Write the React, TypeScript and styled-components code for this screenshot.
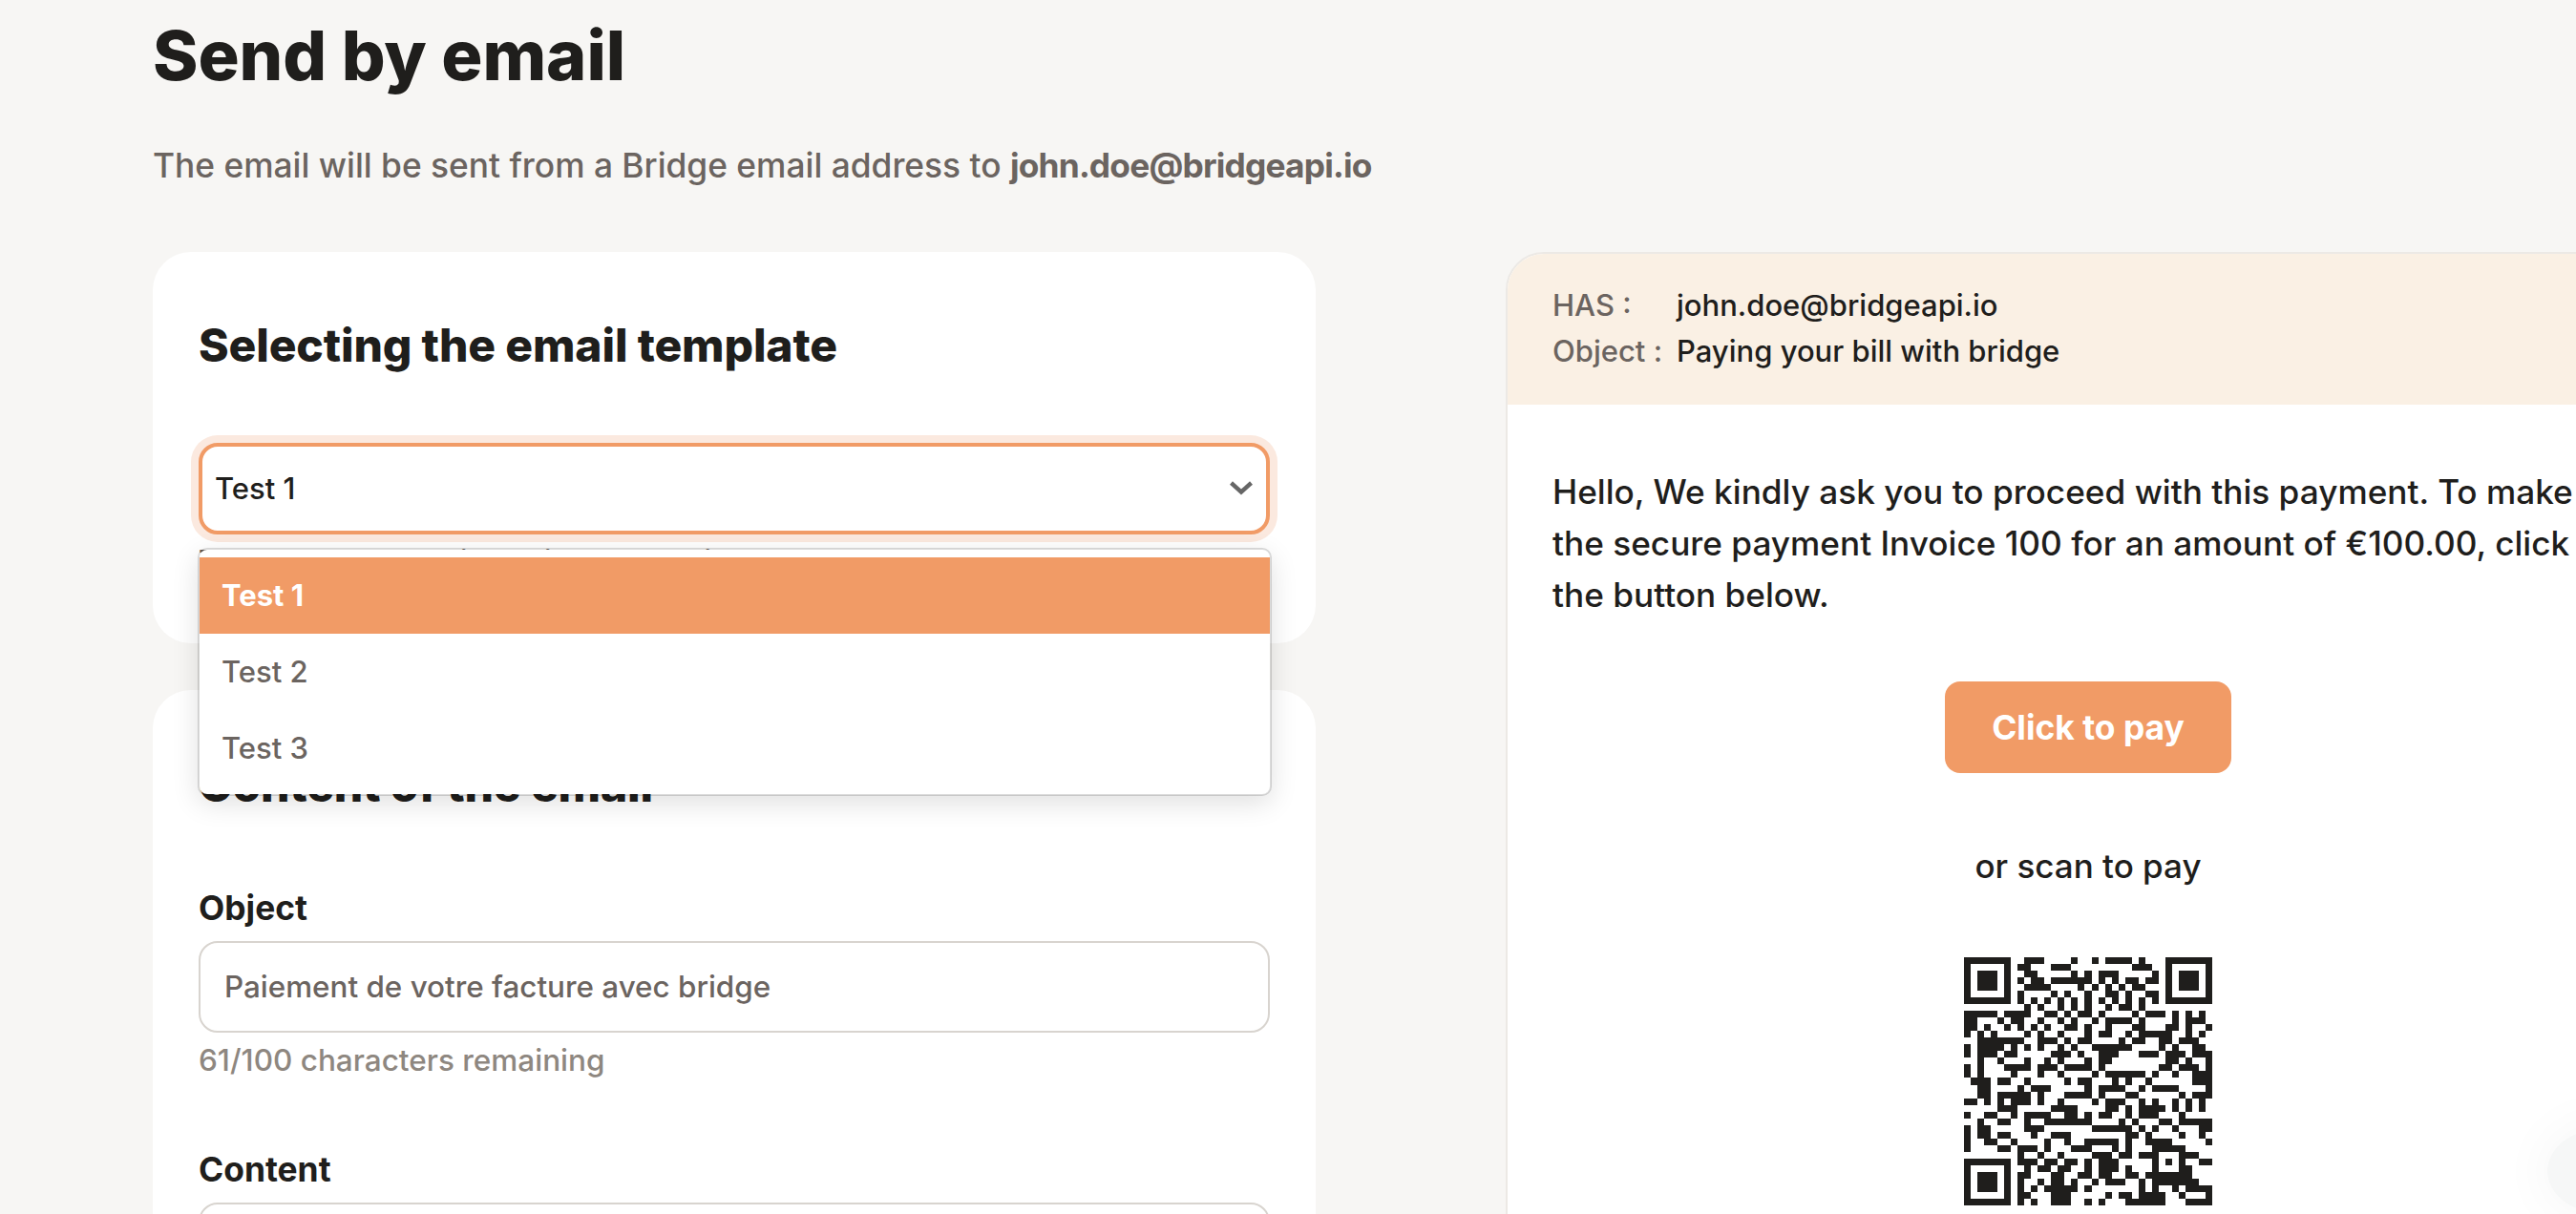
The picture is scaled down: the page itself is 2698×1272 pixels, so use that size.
import React from 'react'
import styled, { createGlobalStyle } from 'styled-components'

const GlobalStyle = createGlobalStyle`
  html, body {
    margin: 0;
    height: 1272px;
    overflow: hidden;
    background: #f7f6f4;
  }
  * {
    box-sizing: border-box;
  }
`

const QR_ROWS = [
  '0-6,9-11,16,19,21-24,26,30-36',
  '0,6,8-9,13-15,25-27,30,36',
  '0,2-4,6,9-10,16,18,20-22,28,30,32-34,36',
  '0,2-4,6,8,10-11,13-18,20,22,24-25,27-28,30,32-34,36',
  '0,2-4,6,9-12,17,19,21,23,25-26,30,32-34,36',
  '0,6,8,13,15,18,21-22,24,27-28,30,36',
  '0-6,8,10,12,14,16,18,20,22,24,26,28,30-36',
  '9,11,14,16,18,21,23-24,26',
  '0-4,6-9,12-13,15,17-18,20,25,27-29,31,33,35',
  '0-1,5,7-8,11,14,16,19,21-24,26,31,33-35',
  '0-1,3,6,8,10,12,15-16,18,21,25-26,30-31,33,36',
  '0,2,4,9,11,14,18,20-21,24,26-30,33,35',
  '2-8,11-13,15,17-18,23,25-26,29-30,32-34',
  '0,2-5,7,9,11,14,16,19-24,29,31,34-35',
  '0,2-4,6-7,13-15,17,20-22,26-28,30-32,34-36',
  '2,5,9,12,14,18,20-21,30-31,33,36',
  '0,2,6-9,11-13,15-18,20,29-30,32-34,36',
  '0,2,7,11,14,19,21-26,28,31,34-36',
  '1-3,5-6,9,15,17-18,22,24,27,34-36',
  '2-3,8,10-12,18,20-23,26,28-31,36',
  '2-3,5-9,11,15-18,20,24-25,32,34-36',
  '0-1,3,5,7-9,11,14,19,21-23,26,28,31,33,35',
  '5-7,13-16,21-22,24,26-29,31,33,35',
  '0,3-4,7,9-12,15-16,18,20-21,24,26-28,32',
  '2,5-6,9,12-18,23,25,29-30,32-36',
  '0,2-3,9-11,19-24,26,28,31,35-36',
  '0,2-3,5-6,10,13-15,24-25,27,32,35',
  '0,3-4,7,12,15,18-22,24,27-30,36',
  '0,5-6,8-10,12,16-18,22,24,28-32',
  '8,11,14,19-21,23-24,26-28,32-34',
  '0-6,8-10,12-13,15-16,18,20-22,28,30,32,35-36',
  '0,6,9,11-12,14-15,18,20-22,24,28,32-33',
  '0,2-4,6,8-9,13-14,17-18,20-21,24-25,27-33',
  '0,2-4,6,8,11,13-14,16,19,21-23,26,28-34',
  '0,2-4,6,8,10,12-16,18,26,28,31,33-36',
  '0,6,8-9,13-15,21,23-24,26-29,32,36',
  '0-6,8,10,13-15,18,20,24-29,33-36',
]

const Page = styled.div`
  font-family: Inter, 'Liberation Sans', sans-serif;
  color: #1f1e1c;
  padding: 18px 0 0 160px;
  width: 2797px;
`

const PageTitle = styled.h1`
  margin: 0 0 54px;
  font-size: 72px;
  line-height: 80px;
  font-weight: 800;
  letter-spacing: -0.1px;
`

const Subtitle = styled.p`
  margin: 0 0 68px;
  font-size: 35.3px;
  line-height: 44px;
  font-weight: 550;
  color: #6b6460;
  strong {
    font-weight: 700;
    letter-spacing: -0.8px;
  }
`

const Columns = styled.div`
  display: flex;
  gap: 199px;
  align-items: flex-start;
`

const LeftColumn = styled.div`
  flex: 0 0 1218px;
  display: flex;
  flex-direction: column;
  gap: 49px;
`

const Card = styled.section`
  background: #ffffff;
  border-radius: 40px;
  padding: 68px 48px 66px;
`

const CardTitle = styled.h2<{ $gap: number; $top?: number }>`
  margin: ${(p) => p.$top ?? 0}px 0 ${(p) => p.$gap}px;
  font-size: 48px;
  line-height: 60px;
  font-weight: 800;
  letter-spacing: -0.15px;
`

const SelectWrapper = styled.div`
  position: relative;
  width: 1122px;
`

const SelectBox = styled.div`
  height: 96px;
  display: flex;
  align-items: center;
  justify-content: space-between;
  padding: 0 13px 2px 13px;
  border: 4px solid #f19b66;
  border-radius: 20px;
  box-shadow: 0 0 0 8px #fbe9df;
  background: #ffffff;
  font-size: 31px;
  font-weight: 550;
`

const Menu = styled.ul`
  position: absolute;
  top: 110px;
  left: -1px;
  width: 1125px;
  margin: 0;
  padding: 8px 0;
  list-style: none;
  background: #ffffff;
  background-clip: padding-box;
  border: 2px solid rgba(0, 0, 0, 0.14);
  border-radius: 10px;
  box-shadow: 0 8px 28px rgba(0, 0, 0, 0.12);
  z-index: 2;
`

const MenuItem = styled.li<{ $active?: boolean }>`
  height: 80px;
  display: flex;
  align-items: center;
  padding: 0 0 2px 23px;
  font-size: 31px;
  font-weight: ${(p) => (p.$active ? 650 : 550)};
  color: ${(p) => (p.$active ? '#ffffff' : '#6b6460')};
  background: ${(p) => (p.$active ? '#f19b66' : 'transparent')};
`

const Hint = styled.div`
  margin-top: 9px;
  font-size: 31.5px;
  line-height: 40px;
  font-weight: 550;
  color: #8e8780;
`

const SelectHint = styled(Hint)`
  margin-top: 8px;
  color: #6b6460;
`

const Field = styled.div`
  margin-bottom: 75px;
`

const FieldLabel = styled.div`
  margin-bottom: 14px;
  font-size: 35.4px;
  line-height: 40px;
  font-weight: 700;
`

const Input = styled.div<{ $open?: boolean }>`
  height: ${(p) => (p.$open ? 200 : 96)}px;
  width: 1122px;
  display: flex;
  align-items: center;
  padding-left: 25px;
  border: 2px solid #d8d4cf;
  border-radius: 20px;
  font-size: 31.4px;
  font-weight: 550;
  color: #6b6460;
`

const Preview = styled.section`
  flex: 0 0 1220px;
  background: #ffffff;
  border: 2px solid #ece9e5;
  border-radius: 40px;
  overflow: hidden;
`

const PreviewHeader = styled.div`
  background: #faf0e4;
  padding: 30px 47px 32px 49px;
  margin: 0 -2px;
`

const HeaderRow = styled.div`
  display: flex;
  height: 48px;
  align-items: center;
  font-size: 31px;
  font-weight: 550;
  padding-bottom: 1px;
`

const HeaderLabel = styled.span`
  flex: 0 0 130px;
  color: #6b6460;
`

const PreviewBody = styled.div`
  display: flex;
  flex-direction: column;
  align-items: center;
  padding: 64px 47px 120px;
`

const Message = styled.p`
  align-self: stretch;
  margin: 0;
  white-space: nowrap;
  font-size: 35.2px;
  line-height: 54px;
  font-weight: 550;
`

const PayButton = styled.div`
  margin-top: 64px;
  width: 300px;
  height: 96px;
  display: flex;
  align-items: center;
  justify-content: center;
  border-radius: 16px;
  background: #f19b66;
  color: #ffffff;
  font-size: 35.4px;
  font-weight: 700;
`

const ScanText = styled.div`
  margin-top: 70px;
  font-size: 35px;
  line-height: 54px;
  font-weight: 550;
`

const QrSvg = styled.svg`
  margin-top: 69px;
  width: 260px;
  height: 260px;
  display: block;
`

const CornerGlow = styled.div`
  position: fixed;
  right: -90px;
  bottom: 0;
  width: 120px;
  height: 90px;
  border-radius: 50%;
  background: #f6f7f7;
  box-shadow: 0 0 50px 10px rgba(0, 0, 0, 0.03);
`

const Chevron = () => (
  <svg width="26" height="16" viewBox="0 0 26 16" fill="none">
    <path d="M2.5 3 L13 12.5 L23.5 3" stroke="#666666" strokeWidth="4.4" strokeLinejoin="miter" />
  </svg>
)

const QrCode = () => (
  <QrSvg viewBox="0 0 37 37" shapeRendering="crispEdges">
    {QR_ROWS.flatMap((row, y) =>
      row.split(',').map((span) => {
        const [from, to = from] = span.split('-').map(Number)
        return <rect key={`${y}-${span}`} x={from} y={y} width={to - from + 1} height="1" fill="#1f1e1c" />
      }),
    )}
  </QrSvg>
)

const App = () => (
  <>
    <GlobalStyle />
    <Page>
      <PageTitle>Send by email</PageTitle>
      <Subtitle>
        The email will be sent from a Bridge email address to <strong>john.doe@bridgeapi.io</strong>
      </Subtitle>
      <Columns>
        <LeftColumn>
          <Card>
            <CardTitle $gap={72}>Selecting the email template</CardTitle>
            <SelectWrapper>
              <SelectBox>
                Test 1
                <Chevron />
              </SelectBox>
              <Menu>
                <MenuItem $active>Test 1</MenuItem>
                <MenuItem>Test 2</MenuItem>
                <MenuItem>Test 3</MenuItem>
              </Menu>
              <SelectHint>Templates are available in your settings</SelectHint>
            </SelectWrapper>
          </Card>
          <Card>
            <CardTitle $top={2} $gap={79}>Content of the email</CardTitle>
            <Field>
              <FieldLabel>Object</FieldLabel>
              <Input>Paiement de votre facture avec bridge</Input>
              <Hint>61/100 characters remaining</Hint>
            </Field>
            <Field>
              <FieldLabel>Content</FieldLabel>
              <Input $open />
            </Field>
          </Card>
        </LeftColumn>
        <Preview>
          <PreviewHeader>
            <HeaderRow>
              <HeaderLabel>HAS :</HeaderLabel>
              john.doe@bridgeapi.io
            </HeaderRow>
            <HeaderRow>
              <HeaderLabel>Object :</HeaderLabel>
              Paying your bill with bridge
            </HeaderRow>
          </PreviewHeader>
          <PreviewBody>
            <Message>
              Hello, We kindly ask you to proceed with this payment. To make
              <br />
              the secure payment Invoice 100 for an amount of €100.00, click on
              <br />
              the button below.
            </Message>
            <PayButton>Click to pay</PayButton>
            <ScanText>or scan to pay</ScanText>
            <QrCode />
          </PreviewBody>
        </Preview>
      </Columns>
    </Page>
    <CornerGlow />
  </>
)

export default App
